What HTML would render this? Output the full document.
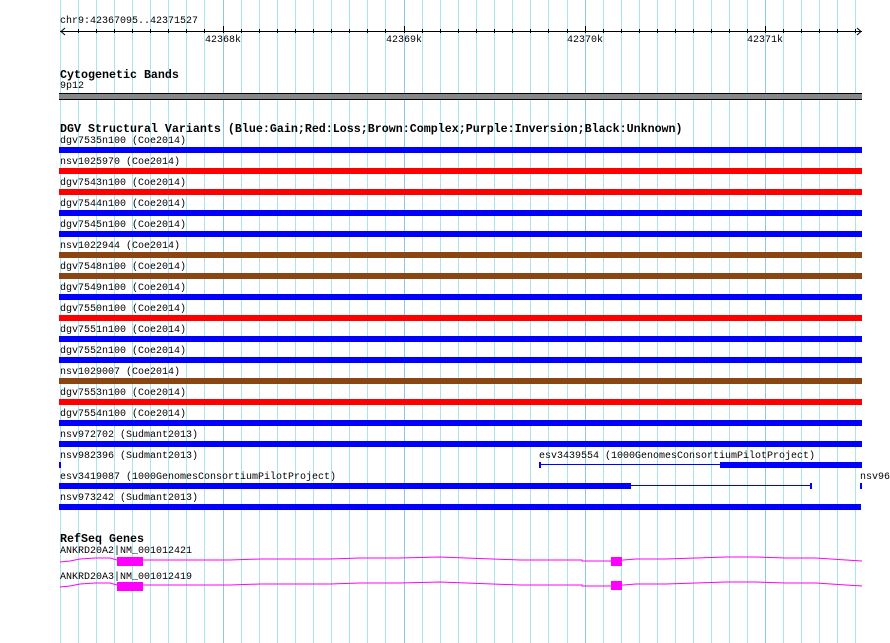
<!DOCTYPE html>
<html><head><meta charset="utf-8"><style>
body{margin:0;width:890px;height:643px;background:#fff;position:relative;overflow:hidden;font-family:"Liberation Mono",monospace;}
.t{position:absolute;font-size:10px;line-height:10px;color:#000;white-space:pre;margin-top:2px;}
.h{position:absolute;font-size:11.67px;line-height:12px;font-weight:bold;color:#000;white-space:pre;margin-top:2px;}
.b{position:absolute;height:6px;}
</style></head><body>
<svg width="890" height="643" style="position:absolute;left:0;top:0">
<g stroke="#a8e4ec" stroke-width="1">
<line x1="60.5" y1="0" x2="60.5" y2="643"/><line x1="78.5" y1="0" x2="78.5" y2="643"/><line x1="96.5" y1="0" x2="96.5" y2="643"/><line x1="114.5" y1="0" x2="114.5" y2="643"/><line x1="132.5" y1="0" x2="132.5" y2="643"/><line x1="150.5" y1="0" x2="150.5" y2="643"/><line x1="168.5" y1="0" x2="168.5" y2="643"/><line x1="186.5" y1="0" x2="186.5" y2="643"/><line x1="204.5" y1="0" x2="204.5" y2="643"/>
<line x1="241.5" y1="0" x2="241.5" y2="643"/><line x1="259.5" y1="0" x2="259.5" y2="643"/><line x1="277.5" y1="0" x2="277.5" y2="643"/><line x1="295.5" y1="0" x2="295.5" y2="643"/><line x1="313.5" y1="0" x2="313.5" y2="643"/><line x1="331.5" y1="0" x2="331.5" y2="643"/><line x1="349.5" y1="0" x2="349.5" y2="643"/><line x1="367.5" y1="0" x2="367.5" y2="643"/><line x1="385.5" y1="0" x2="385.5" y2="643"/>
<line x1="422.5" y1="0" x2="422.5" y2="643"/><line x1="440.5" y1="0" x2="440.5" y2="643"/><line x1="458.5" y1="0" x2="458.5" y2="643"/><line x1="476.5" y1="0" x2="476.5" y2="643"/><line x1="494.5" y1="0" x2="494.5" y2="643"/><line x1="512.5" y1="0" x2="512.5" y2="643"/><line x1="530.5" y1="0" x2="530.5" y2="643"/><line x1="548.5" y1="0" x2="548.5" y2="643"/><line x1="567.5" y1="0" x2="567.5" y2="643"/>
<line x1="603.5" y1="0" x2="603.5" y2="643"/><line x1="621.5" y1="0" x2="621.5" y2="643"/><line x1="639.5" y1="0" x2="639.5" y2="643"/><line x1="657.5" y1="0" x2="657.5" y2="643"/><line x1="675.5" y1="0" x2="675.5" y2="643"/><line x1="693.5" y1="0" x2="693.5" y2="643"/><line x1="711.5" y1="0" x2="711.5" y2="643"/><line x1="729.5" y1="0" x2="729.5" y2="643"/><line x1="747.5" y1="0" x2="747.5" y2="643"/>
<line x1="783.5" y1="0" x2="783.5" y2="643"/><line x1="801.5" y1="0" x2="801.5" y2="643"/><line x1="819.5" y1="0" x2="819.5" y2="643"/><line x1="837.5" y1="0" x2="837.5" y2="643"/><line x1="855.5" y1="0" x2="855.5" y2="643"/>
</g>
<g stroke="#8cc8ee" stroke-width="1">
<line x1="223.5" y1="0" x2="223.5" y2="643"/><line x1="404.5" y1="0" x2="404.5" y2="643"/><line x1="585.5" y1="0" x2="585.5" y2="643"/><line x1="765.5" y1="0" x2="765.5" y2="643"/>
</g>
<g stroke="#000" stroke-width="1" fill="none">
<line x1="60" y1="31.5" x2="862" y2="31.5"/>
<polyline points="65,28 61,31.5 65,35"/>
<polyline points="857,28 861,31.5 857,35"/>
<path d="M78.5 29v4M96.5 29v4M114.5 29v4M132.5 29v4M150.5 29v4M168.5 29v4M186.5 29v4M204.5 29v4M241.5 29v4M259.5 29v4M277.5 29v4M295.5 29v4M313.5 29v4M331.5 29v4M349.5 29v4M367.5 29v4M385.5 29v4M422.5 29v4M440.5 29v4M458.5 29v4M476.5 29v4M494.5 29v4M512.5 29v4M530.5 29v4M548.5 29v4M567.5 29v4M603.5 29v4M621.5 29v4M639.5 29v4M657.5 29v4M675.5 29v4M693.5 29v4M711.5 29v4M729.5 29v4M747.5 29v4M783.5 29v4M801.5 29v4M819.5 29v4M837.5 29v4M855.5 29v4"/>
<path d="M223.5 26v7M404.5 26v7M585.5 26v7M765.5 26v7"/>
</g>
<rect x="59" y="93" width="803" height="7" fill="#878787"/>
<line x1="59" y1="93.5" x2="862" y2="93.5" stroke="#000"/>
<line x1="59" y1="99.5" x2="862" y2="99.5" stroke="#000"/>
<rect x="59" y="462" width="2" height="6" fill="#0000ff"/>
<rect x="539" y="462" width="2" height="6" fill="#0000ff"/>
<line x1="540" y1="464.5" x2="720" y2="464.5" stroke="#0000ff"/>
<rect x="720" y="462" width="142" height="6" fill="#0000ff"/>
<rect x="59" y="483" width="572" height="6" fill="#0000ff"/>
<line x1="631" y1="485.5" x2="811" y2="485.5" stroke="#0000ff"/>
<rect x="810" y="483" width="2" height="6" fill="#0000ff"/>
<rect x="860" y="483" width="2" height="6" fill="#0000ff"/>
<g stroke="#ff00ff" fill="none" stroke-width="1">
<polyline points="60,562 70,561 80,559 95,558 110,558 117,560 145,560 180,560 230,560 260,559 290,559 330,559 360,558 400,558 440,557 520,560 582,560 582,561 611,561 636,559 666,559 696,558 726,557 756,557 786,558 816,558 846,560 862,561"/>
<polyline points="60,587 70,586 80,584 95,583 110,583 117,585 145,585 180,585 230,585 260,584 290,584 330,584 360,583 400,583 440,582 520,585 582,585 582,586 611,586 636,584 666,584 696,583 726,582 756,582 786,583 816,583 846,585 862,586"/>
</g>
<rect x="117" y="557" width="26" height="9" fill="#ff00ff"/>
<rect x="611" y="557" width="11" height="9" fill="#ff00ff"/>
<rect x="117" y="582" width="26" height="9" fill="#ff00ff"/>
<rect x="611" y="581" width="11" height="9" fill="#ff00ff"/>
</svg>

<div class="t" style="left:60px;top:15px">chr9:42367095..42371527</div>
<div class="t" style="left:205px;top:34px">42368k</div>
<div class="t" style="left:386px;top:34px">42369k</div>
<div class="t" style="left:567px;top:34px">42370k</div>
<div class="t" style="left:747px;top:34px">42371k</div>

<div class="h" style="left:60px;top:67px">Cytogenetic Bands</div>
<div class="t" style="left:60px;top:80px">9p12</div>

<div class="h" style="left:60px;top:121px">DGV Structural Variants (Blue:Gain;Red:Loss;Brown:Complex;Purple:Inversion;Black:Unknown)</div>

<div class="t" style="left:60px;top:135px">dgv7535n100 (Coe2014)</div><div class="b" style="left:59px;top:147px;width:803px;background:#0000ff"></div>
<div class="t" style="left:60px;top:156px">nsv1025970 (Coe2014)</div><div class="b" style="left:59px;top:168px;width:803px;background:#ff0000"></div>
<div class="t" style="left:60px;top:177px">dgv7543n100 (Coe2014)</div><div class="b" style="left:59px;top:189px;width:803px;background:#ff0000"></div>
<div class="t" style="left:60px;top:198px">dgv7544n100 (Coe2014)</div><div class="b" style="left:59px;top:210px;width:803px;background:#0000ff"></div>
<div class="t" style="left:60px;top:219px">dgv7545n100 (Coe2014)</div><div class="b" style="left:59px;top:231px;width:803px;background:#0000ff"></div>
<div class="t" style="left:60px;top:240px">nsv1022944 (Coe2014)</div><div class="b" style="left:59px;top:252px;width:803px;background:#8b4513"></div>
<div class="t" style="left:60px;top:261px">dgv7548n100 (Coe2014)</div><div class="b" style="left:59px;top:273px;width:803px;background:#8b4513"></div>
<div class="t" style="left:60px;top:282px">dgv7549n100 (Coe2014)</div><div class="b" style="left:59px;top:294px;width:803px;background:#0000ff"></div>
<div class="t" style="left:60px;top:303px">dgv7550n100 (Coe2014)</div><div class="b" style="left:59px;top:315px;width:803px;background:#ff0000"></div>
<div class="t" style="left:60px;top:324px">dgv7551n100 (Coe2014)</div><div class="b" style="left:59px;top:336px;width:803px;background:#0000ff"></div>
<div class="t" style="left:60px;top:345px">dgv7552n100 (Coe2014)</div><div class="b" style="left:59px;top:357px;width:803px;background:#0000ff"></div>
<div class="t" style="left:60px;top:366px">nsv1029007 (Coe2014)</div><div class="b" style="left:59px;top:378px;width:803px;background:#8b4513"></div>
<div class="t" style="left:60px;top:387px">dgv7553n100 (Coe2014)</div><div class="b" style="left:59px;top:399px;width:803px;background:#ff0000"></div>
<div class="t" style="left:60px;top:408px">dgv7554n100 (Coe2014)</div><div class="b" style="left:59px;top:420px;width:803px;background:#0000ff"></div>
<div class="t" style="left:60px;top:429px">nsv972702 (Sudmant2013)</div><div class="b" style="left:59px;top:441px;width:803px;background:#0000ff"></div>
<div class="t" style="left:60px;top:450px">nsv982396 (Sudmant2013)</div>
<div class="t" style="left:539px;top:450px">esv3439554 (1000GenomesConsortiumPilotProject)</div>
<div class="t" style="left:60px;top:471px">esv3419087 (1000GenomesConsortiumPilotProject)</div>
<div class="t" style="left:860px;top:471px">nsv96</div>
<div class="t" style="left:60px;top:492px">nsv973242 (Sudmant2013)</div><div class="b" style="left:59px;top:504px;width:802px;background:#0000ff"></div>

<div class="h" style="left:60px;top:531px">RefSeq Genes</div>
<div class="t" style="left:60px;top:545px">ANKRD20A2|NM_001012421</div>
<div class="t" style="left:60px;top:571px">ANKRD20A3|NM_001012419</div>
</body></html>
